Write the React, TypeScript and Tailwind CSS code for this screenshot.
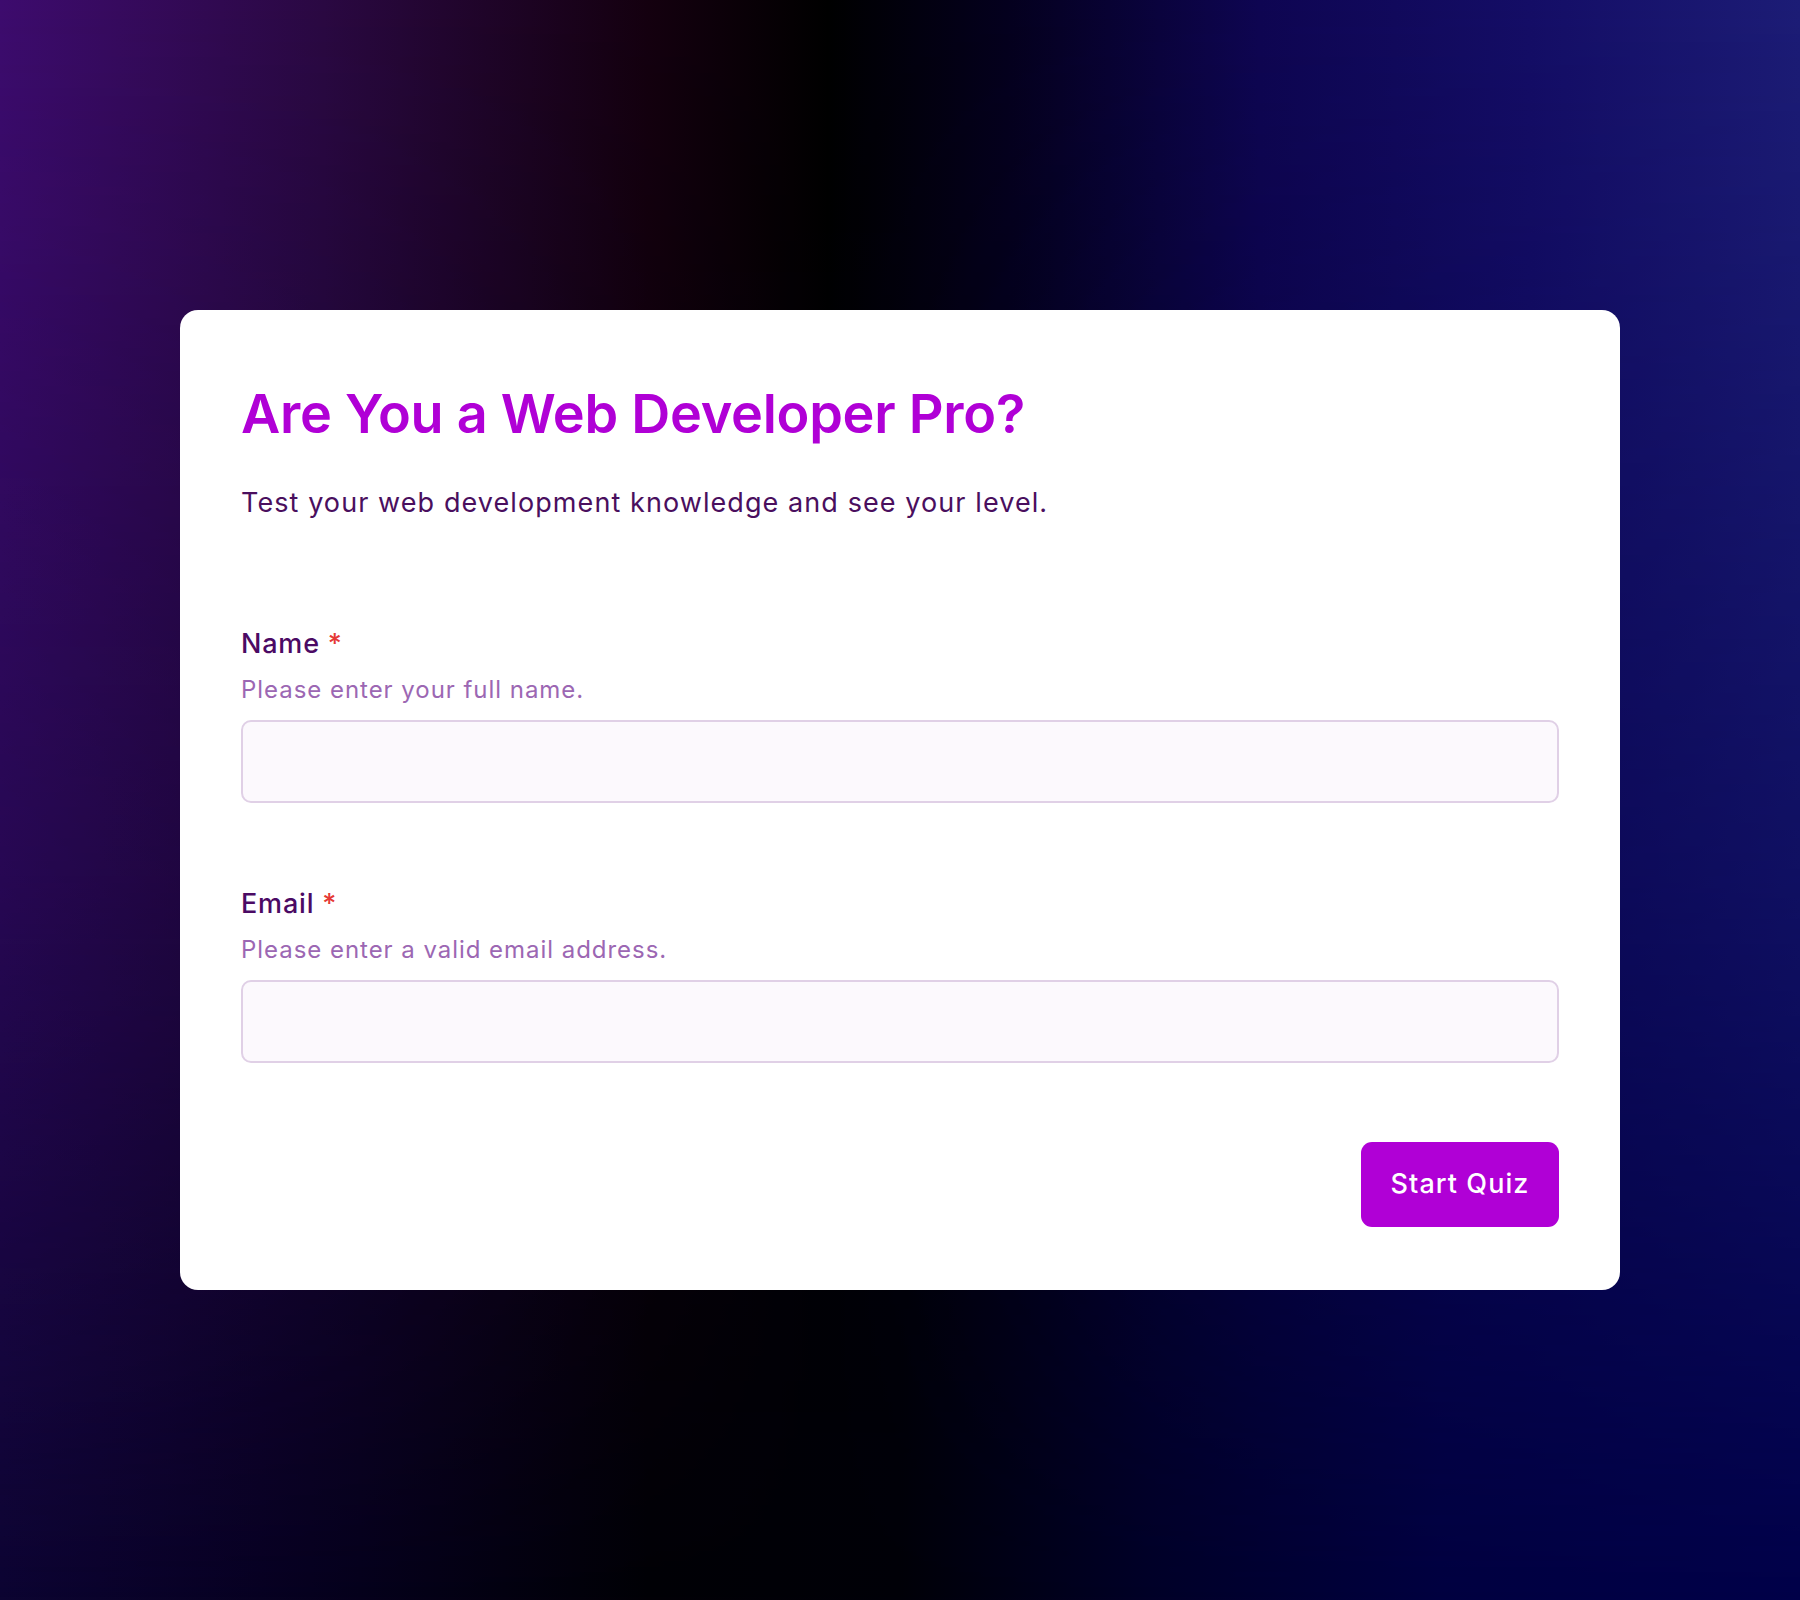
import React, { useState } from 'react';

const Field: React.FC<{
    label: string;
    hint: string;
    type: string;
    value: string;
    onChange: (v: string) => void;
    className?: string;
}> = ({ label, hint, type, value, onChange, className }) => (
    <div className={className}>
        <label className="block text-[27px] leading-[36px] font-medium tracking-[0.03em] text-[#4b0a64]">
            {label} <span className="text-[#e53935]">*</span>
        </label>
        <p className="mt-[12px] text-[24px] leading-[32px] tracking-[0.04em] text-[#9c67b3]">{hint}</p>
        <input
            type={type}
            value={value}
            onChange={(e) => onChange(e.target.value)}
            className="mt-[14px] block w-full h-[83px] rounded-[10px] border-2 border-[#e0d0e6] bg-[#fcf9fd] px-5 text-[26px] text-[#4b0a64] outline-none focus:border-[#b000d6]"
        />
    </div>
);

const App: React.FC = () => {
    const [name, setName] = useState('');
    const [email, setEmail] = useState('');

    return (
        <div className="relative min-h-screen w-full flex items-center justify-center font-['Inter','Noto_Sans',sans-serif] bg-[linear-gradient(to_right,#0c0432_0%,#05001c_20%,#010006_36%,#000008_50%,#010028_64%,#000040_80%,#000049_100%)]">
            {/* top glow, fades out toward the bottom */}
            <div className="pointer-events-none absolute inset-0 bg-[linear-gradient(to_right,#3d0b6e_0%,#2a0842_18%,#14000f_36%,#000000_46%,#04001e_56%,#0e0552_70%,#140d66_85%,#1c1c76_100%)] [mask-image:linear-gradient(to_bottom,black_0%,rgba(0,0,0,0.55)_55%,transparent_100%)]" />

            <div className="relative w-[1440px] rounded-[18px] bg-white px-[61px] pt-[71px] pb-[63px]">
                {/* Header */}
                <h1 className="text-[54px] leading-[65px] font-semibold tracking-[-0.005em] text-[#b000d6]">
                    Are You a Web Developer Pro?
                </h1>
                <p className="mt-[37px] text-[27px] leading-[40px] tracking-[0.04em] text-[#4a0f5e]">
                    Test your web development knowledge and see your level.
                </p>

                {/* Form */}
                <Field
                    className="mt-[103px]"
                    label="Name"
                    hint="Please enter your full name."
                    type="text"
                    value={name}
                    onChange={setName}
                />
                <Field
                    className="mt-[83px]"
                    label="Email"
                    hint="Please enter a valid email address."
                    type="email"
                    value={email}
                    onChange={setEmail}
                />

                <div className="mt-[79px] flex justify-end">
                    <button className="w-[198px] h-[85px] rounded-[11px] bg-[#b000d6] text-[27px] font-medium tracking-[0.04em] text-white hover:bg-[#9a00bb] transition-colors">
                        Start Quiz
                    </button>
                </div>
            </div>
        </div>
    );
};

export default App;
